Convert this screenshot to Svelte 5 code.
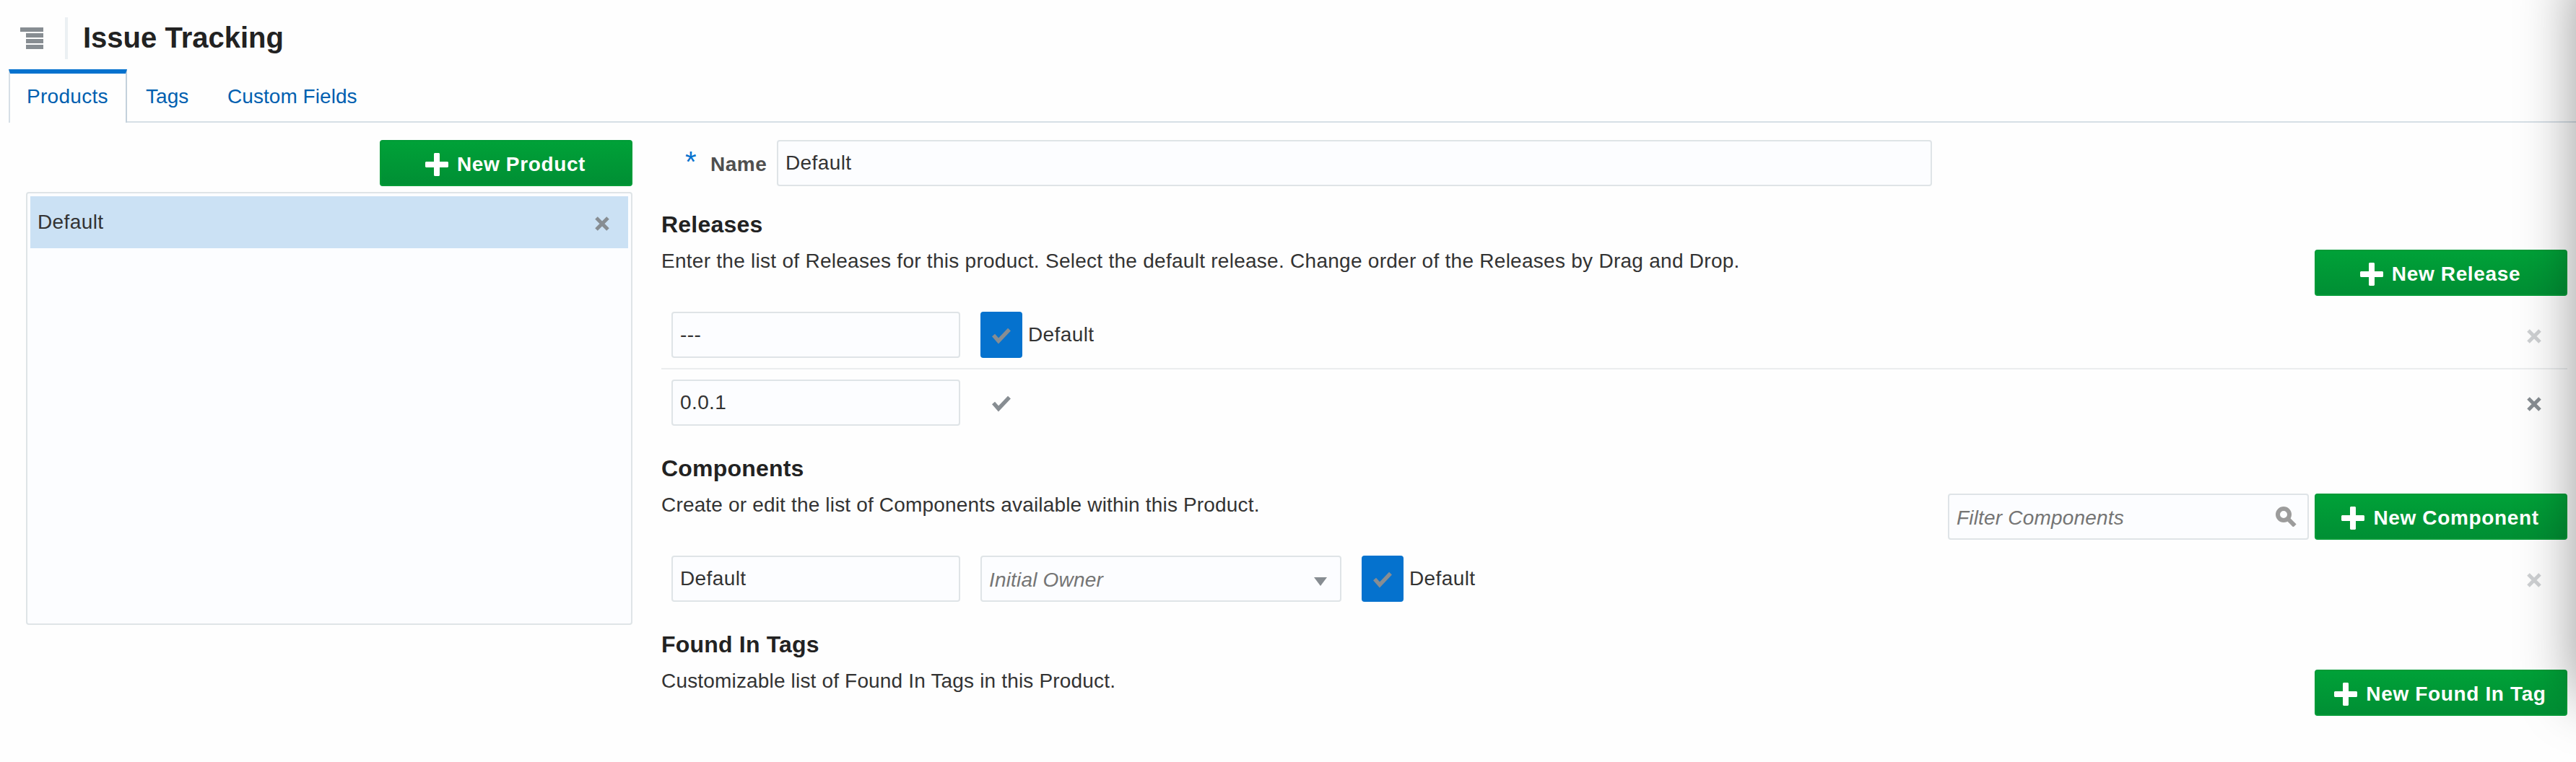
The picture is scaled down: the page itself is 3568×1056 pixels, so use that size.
<script>
  let tab = $state('Products');
  const tabs = ['Products', 'Tags', 'Custom Fields'];
  const releases = [
    { name: '---', isDefault: true },
    { name: '0.0.1', isDefault: false }
  ];
  const components = [{ name: 'Default', isDefault: true }];
</script>

{#snippet plusButton(label)}
  <button class="primary">
    <svg class="plus" viewBox="0 0 32 32"><path d="M13 0h6l1 1v11h11l1 1v6l-1 1H20v11l-1 1h-6l-1-1V20H1l-1-1v-6l1-1h11V1z" /></svg>
    <span>{label}</span>
  </button>
{/snippet}

{#snippet cross(disabled)}
  <svg class="cross" class:disabled viewBox="0 0 20 20"><path d="M2 2L18 18M18 2L2 18" /></svg>
{/snippet}

{#snippet defaultToggle(on)}
  <button class="toggle" class:on aria-label="Default">
    <svg viewBox="0 0 26 24"><path d="M2 10.5L9 18.4L24 2.6" /></svg>
  </button>
  {#if on}<span class="toggle-label">Default</span>{/if}
{/snippet}

<div class="page">
  <header>
    <svg class="menu" viewBox="0 0 32 30"><path d="M0 0h32v6H0zM8 8h24v6H8zM8 16h24v6H8zM8 24h24v6H8z" /></svg>
    <i class="rule"></i>
    <h1>Issue Tracking</h1>
  </header>

  <nav>
    {#each tabs as name}
      <button class="tab" class:active={tab === name} onclick={() => (tab = name)}>{name}</button>
    {/each}
  </nav>

  <main>
    <aside>
      {@render plusButton('New Product')}
      <div class="list">
        <div class="item"><span>Default</span>{@render cross(false)}</div>
      </div>
    </aside>

    <div class="detail">
      <div class="name-row">
        <span class="star">*</span>
        <span class="label">Name</span>
        <input class="name" value="Default" />
      </div>

      <section>
        <h2>Releases</h2>
        <div class="intro">
          <p class="long">Enter the list of Releases for this product. Select the default release. Change order of the Releases by Drag and Drop.</p>
          {@render plusButton('New Release')}
        </div>
        <div class="rows">
          {#each releases as r}
            <div class="row">
              <input value={r.name} />
              {@render defaultToggle(r.isDefault)}
              {@render cross(r.isDefault)}
            </div>
          {/each}
        </div>
      </section>

      <section>
        <h2>Components</h2>
        <div class="intro">
          <p>Create or edit the list of Components available within this Product.</p>
          <div class="field filter">
            <span>Filter Components</span>
            <svg class="search" viewBox="0 0 30 28"><circle cx="11" cy="11" r="8" /><path d="M16.5 16.5L26.5 26.5" /></svg>
          </div>
          {@render plusButton('New Component')}
        </div>
        <div class="rows">
          {#each components as c}
            <div class="row">
              <input value={c.name} />
              <div class="field owner">
                <span>Initial Owner</span>
                <svg class="arrow" viewBox="0 0 18 12"><path d="M0 0h18L9 12z" /></svg>
              </div>
              {@render defaultToggle(c.isDefault)}
              {@render cross(c.isDefault)}
            </div>
          {/each}
        </div>
      </section>

      <section>
        <h2>Found In Tags</h2>
        <div class="intro">
          <p>Customizable list of Found In Tags in this Product.</p>
          {@render plusButton('New Found In Tag')}
        </div>
      </section>
    </div>
  </main>
  <div class="edge"></div>
</div>

<style>
  :global(body) { margin: 0; background: #fff; overflow: hidden; }
  .page {
    position: relative; width: 3568px; height: 1056px; overflow: hidden; box-sizing: border-box;
    font: 28px/32px "Liberation Sans", Arial, sans-serif; letter-spacing: 0.4px; color: #333; background: #fefefe;
  }
  .page :global(*) { box-sizing: border-box; }
  button, input { font: inherit; letter-spacing: inherit; color: inherit; margin: 0; }
  svg { flex: none; display: block; }

  header { height: 96px; display: flex; align-items: flex-start; padding-left: 28px; }
  .menu { width: 32px; height: 30px; margin-top: 38px; fill: #878d92; }
  .rule { width: 4px; height: 58px; margin: 24px 21px 0 30px; background: #ebf0f3; }
  h1 { margin: 29px 0 0; font-size: 40px; line-height: 46px; color: #222; letter-spacing: 0; }

  nav { height: 74px; display: flex; padding-left: 12px; }
  nav::after { content: ''; flex: 1; border-bottom: 2px solid #d6dfe6; }
  .tab {
    height: 74px; border: 0; border-bottom: 2px solid #d6dfe6; background: none; color: #0060b0;
    padding: 4px 0 0; width: 113px; text-align: left; padding-left: 26px; white-space: nowrap;
    letter-spacing: 0.05px;
  }
  .tab.active {
    width: 164px; border: 2px solid #c4d1dc; border-left-color: #d6dfe6; border-top: 6px solid #0572ce;
    border-bottom: 0; padding: 0 0 4px 23px; letter-spacing: 0.3px;
  }

  main { display: flex; padding: 24px 12px 0 36px; }
  aside { width: 840px; display: flex; flex-direction: column; align-items: flex-end; gap: 8px; }
  .detail { flex: 1; margin-left: 40px; }

  .primary {
    width: 350px; height: 64px; flex: none; display: flex; align-items: center; justify-content: center; gap: 12px;
    border: 2px solid #009b37; border-radius: 4px; padding: 0 2px 0 0; color: #fff; font-weight: bold;
    background: linear-gradient(#00a138, #008f34); white-space: nowrap; letter-spacing: 0.64px;
  }
  .primary span { padding-top: 4px; }
  .plus { width: 32px; height: 32px; fill: #fff; margin-top: 4px; }

  .list { width: 840px; height: 600px; border: 2px solid #dfe4e7; border-radius: 4px; background: #fcfdff; padding: 4px; }
  .item { height: 72px; background: #cbe1f4; display: flex; align-items: center; justify-content: space-between; padding: 0 26px 0 10px; }

  .cross { width: 20px; height: 20px; fill: none; stroke: #878d92; stroke-width: 5; margin-top: 4px; }
  .cross.disabled { opacity: 0.4; }

  .name-row { height: 64px; display: flex; align-items: center; margin-bottom: 8px; }
  .star { width: 68px; padding: 0 0 4px 33px; color: #0572ce; font-size: 40px; }
  .label { width: 92px; font-weight: bold; color: #4f4f4f; padding-top: 4px; letter-spacing: 0.5px; }
  input, .field { height: 64px; border: 2px solid #dfe4e7; border-radius: 4px; background: #fcfdff; padding: 0 10px; outline: none; }
  input { width: 400px; }
  .name { width: 1600px; }

  section { padding-top: 26px; }
  h2 { margin: 0; font-size: 32px; line-height: 38px; color: #222; letter-spacing: 0.2px; }
  .intro { display: flex; align-items: flex-start; padding-top: 16px; gap: 8px; }
  .intro p { flex: 1; margin: 0; white-space: nowrap; letter-spacing: 0.17px; }
  .intro p.long { letter-spacing: 0.27px; }

  .rows { padding-top: 8px; }
  .row { display: flex; align-items: center; padding: 14px 36px 14px 14px; }
  .row + .row { border-top: 2px solid #ebedee; }
  .row .cross { margin-left: auto; }
  .toggle { width: 58px; height: 64px; margin-left: 28px; border: 0; border-radius: 4px; padding: 0 0 0 16px; background: none; }
  .toggle.on { background: #0572ce; }
  .toggle svg { width: 26px; height: 24px; fill: none; stroke: #878d92; stroke-width: 5.4; margin-top: 4px; }
  .toggle-label { margin-left: 8px; }

  .field { display: flex; align-items: center; justify-content: space-between; width: 500px; font-style: italic; color: #757575; letter-spacing: 0.18px; }
  .field span { padding-top: 4px; }
  .owner { margin-left: 28px; padding-right: 18px; }
  .filter { padding-right: 14px; }
  .arrow { width: 18px; height: 12px; fill: #878d92; margin-top: 8px; }
  .search { width: 30px; height: 28px; fill: none; stroke: #9c9c9c; stroke-width: 6; }

  /* shadow cast by the panel beyond the right edge */
  .edge { position: absolute; left: 3568px; top: -40px; width: 200px; height: 1005px; box-shadow: 0 0 80px rgba(0, 0, 0, 0.4); }
</style>
